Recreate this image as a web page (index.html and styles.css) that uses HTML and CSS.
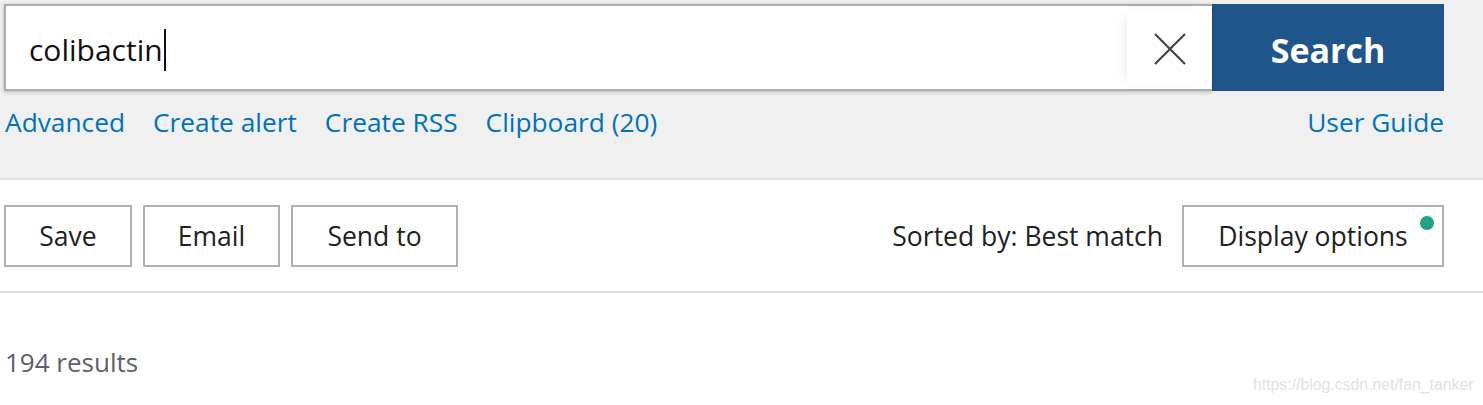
FILE: index.html
```html
<!DOCTYPE html>
<html>
<head>
<meta charset="utf-8">
<link rel="stylesheet" href="styles.css">
</head>
<body>
<header class="search-area">
  <form class="search-form">
    <div class="search-input">
      <span class="query">colibactin</span><span class="caret"></span>
      <div class="clear-btn">
        <svg width="32" height="32" viewBox="0 0 32 32"><path d="M1 1 L31 31 M31 1 L1 31" stroke="#48433f" stroke-width="2.2" fill="none"/></svg>
      </div>
    </div>
    <button type="button" class="search-btn">Search</button>
  </form>
  <nav class="links">
    <a class="link">Advanced</a>
    <a class="link">Create alert</a>
    <a class="link">Create RSS</a>
    <a class="link">Clipboard (20)</a>
    <a class="link guide">User Guide</a>
  </nav>
</header>
<section class="toolbar">
  <div class="toolbar-inner">
    <div class="actions">
      <button type="button" class="btn btn-save">Save</button>
      <button type="button" class="btn btn-email">Email</button>
      <button type="button" class="btn btn-send">Send to</button>
    </div>
    <div class="sort">
      <span class="sorted">Sorted by: Best match</span>
      <button type="button" class="btn btn-display">Display options<span class="dot"></span></button>
    </div>
  </div>
</section>
<div class="results">194 results</div>
<div class="watermark">https://blog.csdn.net/fan_tanker</div>
</body>
</html>
```
FILE: styles.css
```css
* { box-sizing: border-box; }
html, body { margin: 0; padding: 0; background: #fff; }
body {
  width: 1483px;
  height: 405px;
  overflow: hidden;
  font-family: "Open Sans", "Noto Sans", sans-serif;
  color: #212121;
  position: relative;
}
.search-area {
  background: #f0f0f0;
  height: 180px;
  border-bottom: 2px solid #dcdcdc;
  padding: 4px 0 0 4px;
}
.search-form {
  display: flex;
  width: 1440px;
  height: 87px;
}
.search-input {
  flex: 1;
  position: relative;
  display: flex;
  align-items: center;
  background: #fff;
  border: 2px solid #ababab;
  border-right: none;
  box-shadow: 0 1px 4px rgba(0,0,0,0.25);
  padding-left: 23px;
}
.query {
  font-size: 30px;
  color: #111;
  letter-spacing: 0;
  margin-top: 3px;
}
.caret {
  display: inline-block;
  width: 2px;
  height: 42px;
  background: #111;
  margin-left: 1px;
  margin-top: 4px;
}
.clear-btn {
  position: absolute;
  right: 0;
  top: 6px;
  bottom: 5px;
  width: 85px;
  background: #fff;
  display: flex;
  align-items: center;
  justify-content: center;
  box-shadow: -6px 0 10px -4px rgba(0,0,0,0.08);
}
.clear-btn svg { margin-top: 2px; }
.search-btn {
  width: 232px;
  height: 87px;
  border: none;
  background: #20558a;
  color: #fff;
  font-family: "Open Sans", sans-serif;
  font-weight: 700;
  font-size: 34px;
  padding: 4px 0 0;
}
.links {
  display: flex;
  gap: 28px;
  width: 1440px;
  margin-top: 14px;
  padding-left: 1px;
}
.link {
  color: #0071bc;
  font-size: 26.3px;
  line-height: 34px;
}
.guide { margin-left: auto; }
.toolbar {
  border-bottom: 2px solid #dcdcdc;
  height: 113px;
  padding: 25px 0 0 4px;
}
.toolbar-inner {
  display: flex;
  justify-content: space-between;
  align-items: center;
  width: 1440px;
}
.actions { display: flex; gap: 11px; }
.btn {
  height: 62px;
  border: 2px solid #b0b0b4;
  background: #fff;
  font-family: "Open Sans", sans-serif;
  font-size: 26.5px;
  color: #212121;
  padding: 0;
}
.btn-save { width: 128px; }
.btn-email { width: 137px; }
.btn-send { width: 167px; }
.sort { display: flex; align-items: center; gap: 19px; }
.sorted { font-size: 26.5px; }
.btn-display {
  width: 262px;
  position: relative;
}
.dot {
  position: absolute;
  top: 9px;
  right: 8px;
  width: 14px;
  height: 14px;
  border-radius: 50%;
  background: #1fa286;
}
.results {
  padding: 51px 0 0 5px;
  font-size: 26px;
  color: #5b616b;
}
.watermark {
  position: absolute;
  left: 1253px;
  top: 376px;
  font-family: "Liberation Sans", Arial, sans-serif;
  font-size: 15.8px;
  color: #e2e2e2;
}
```
